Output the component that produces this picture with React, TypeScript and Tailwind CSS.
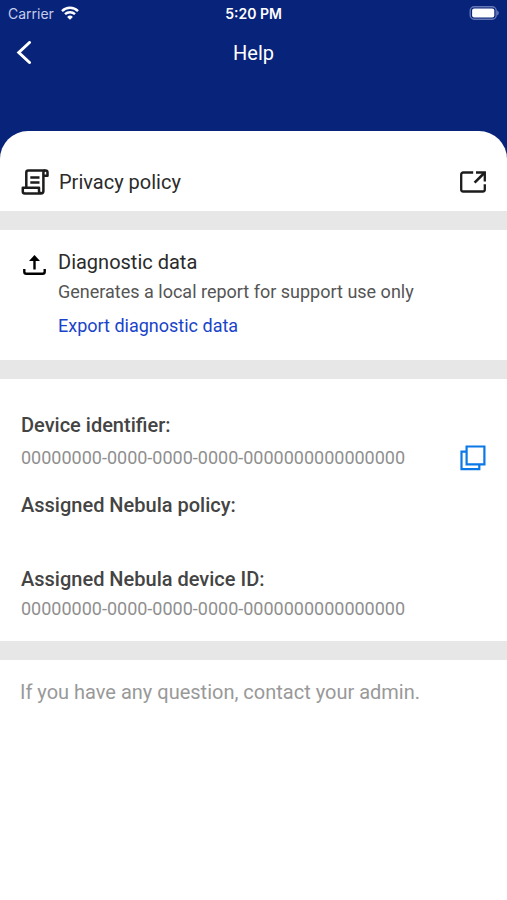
import type { ReactNode } from "react";

const DEVICE_ID = "00000000-0000-0000-0000-0000000000000000";

function StatusBar() {
  return (
    <div className="grid h-7 grid-cols-3 items-center px-2 text-sm text-white">
      <div className="flex items-center gap-[7px] font-['Inter',sans-serif] text-[#c5cdea]">
        <span>Carrier</span>
        <svg className="mb-0.5 h-3.5 w-[18px]" viewBox="0 0 18 14" fill="none" stroke="#fff" strokeWidth="2.4">
          <path d="M1 5.100a11.400 11.400 0 0 1 16 0" />
          <path d="M4 8.200a7.200 7.200 0 0 1 10 0" />
          <path d="M9 13.800 6.100 10.900a4.200 4.200 0 0 1 5.800 0Z" fill="#fff" stroke="none" />
        </svg>
      </div>
      <span className="text-center font-['Inter',sans-serif] font-semibold">5:20 PM</span>
      <svg className="mb-0.5 h-3.5 w-[30px] justify-self-end" viewBox="0 0 30 14" fill="none">
        <rect x="1.2" y="0.7" width="26" height="12.600" rx="4" stroke="#6577b4" strokeWidth="1.400" />
        <rect x="3.100" y="2.600" width="22.200" height="8.800" rx="2" fill="#fff" />
        <path d="M28.200 4.600c2 .8 2 4 0 4.800Z" fill="#7384bd" />
      </svg>
    </div>
  );
}

function NavBar() {
  return (
    <div className="grid h-[50px] grid-cols-[1fr_auto_1fr] items-center px-4 text-white">
      <button type="button" aria-label="Back" className="w-4">
        <svg className="h-6 w-4" viewBox="0 0 16 24" fill="none" stroke="currentColor" strokeWidth="3">
          <path d="M13.500 1.500 2.800 11.500l10.700 10" strokeLinecap="round" />
        </svg>
      </button>
      <h1 className="text-xl leading-6">Help</h1>
    </div>
  );
}

function PolicyIcon() {
  return (
    <svg className="h-[26px] w-7 shrink-0" viewBox="0 0 28 26" fill="none" stroke="#1c1c1c" strokeWidth="2.500" strokeLinejoin="round">
      <path d="M5.300 18V3.500a2 2 0 0 1 2-2h17.200a2 2 0 0 1 2 2v3.200h-4" />
      <path d="M24.300 1.500a2 2 0 0 0-1.900 2v18.500a2.400 2.400 0 0 1-2.400 2.400H3.800a2 2 0 0 1-2-2v-3.700H18v3.300a2.300 2.300 0 0 0 2.200 2.300" />
      <path d="M9.300 8.500h9.200M9.300 13.500h9.200" />
    </svg>
  );
}

function OpenIcon() {
  return (
    <svg className="h-[22px] w-[26px]" viewBox="0 0 26 22" fill="none" stroke="#1c1c1c" strokeWidth="2.300">
      <path d="M13.200 1.500H3.200a2 2 0 0 0-2 2v15a2 2 0 0 0 2 2h19.600a2 2 0 0 0 2-2v-5.300" />
      <path d="M16 1.500h8.800v9" />
      <path d="M24.300 2 14.600 11.600" strokeWidth="2.600" />
    </svg>
  );
}

function UploadIcon() {
  return (
    <svg className="h-5 w-[23px]" viewBox="0 0 23 20" fill="none" stroke="#000" strokeWidth="2.400">
      <path d="M1.300 14v2.800a2 2 0 0 0 2 2h16.400a2 2 0 0 0 2-2V14" />
      <path d="M11.500 14.500V3" />
      <path d="M11.500 0 17 6H6Z" fill="#000" stroke="none" />
    </svg>
  );
}

function CopyIcon() {
  return (
    <svg className="h-[26px] w-[26px]" viewBox="0 0 26 26" fill="none" stroke="#0b78e6" strokeWidth="2.200">
      <path d="M6.600 1.500h17.800v17.800H6.600Z" />
      <path d="M6.500 6.700H1.500v17.500h17.800v-5" />
    </svg>
  );
}

function Section({ className, children }: { className: string; children: ReactNode }) {
  return <section className={`border-b-[19px] border-[#e7e7e7] px-[21px] ${className}`}>{children}</section>;
}

export default function App() {
  return (
    <div className="min-h-screen bg-white font-['Roboto',sans-serif]">
      <header className="bg-[#08237a] pb-[81px]">
        <StatusBar />
        <NavBar />
      </header>

      <main className="-mt-7 rounded-t-[28px] bg-white">
        <Section className="pt-[37px] pb-[15px]">
          <a href="#privacy" className="flex items-center justify-between text-[#2b2b2b]">
            <span className="flex items-center gap-2.5">
              <PolicyIcon />
              <span className="text-xl leading-7">Privacy policy</span>
            </span>
            <OpenIcon />
          </a>
        </Section>

        <Section className="flex gap-3 pt-[18px] pb-[22px]">
          <div className="pt-[7px] pl-0.5">
            <UploadIcon />
          </div>
          <div className="flex flex-col items-start">
            <h2 className="text-xl leading-7 text-[#2b2b2b]">Diagnostic data</h2>
            <p className="mt-1 text-lg leading-6 text-[#555]">Generates a local report for support use only</p>
            <button type="button" className="mt-2.5 text-lg leading-6 text-[#1943c8]">
              Export diagnostic data
            </button>
          </div>
        </Section>

        <Section className="pt-8 pb-5">
          <dl>
            <dt className="text-xl leading-7 font-medium text-[#444]">Device identifier:</dt>
            <dd className="flex items-center justify-between pt-1.5 text-lg leading-6 text-[#8f8f8f]">
              <span>{DEVICE_ID}</span>
              <button type="button" aria-label="Copy device identifier">
                <CopyIcon />
              </button>
            </dd>
            <dt className="mt-5 text-xl leading-7 font-medium text-[#444]">Assigned Nebula policy:</dt>
            <dd className="h-[46px]" />
            <dt className="text-xl leading-7 font-medium text-[#444]">Assigned Nebula device ID:</dt>
            <dd className="pt-1 text-lg leading-6 text-[#8f8f8f]">{DEVICE_ID}</dd>
          </dl>
        </Section>

        <p className="px-5 py-[18px] text-xl leading-7 text-[#999]">If you have any question, contact your admin.</p>
      </main>
    </div>
  );
}
